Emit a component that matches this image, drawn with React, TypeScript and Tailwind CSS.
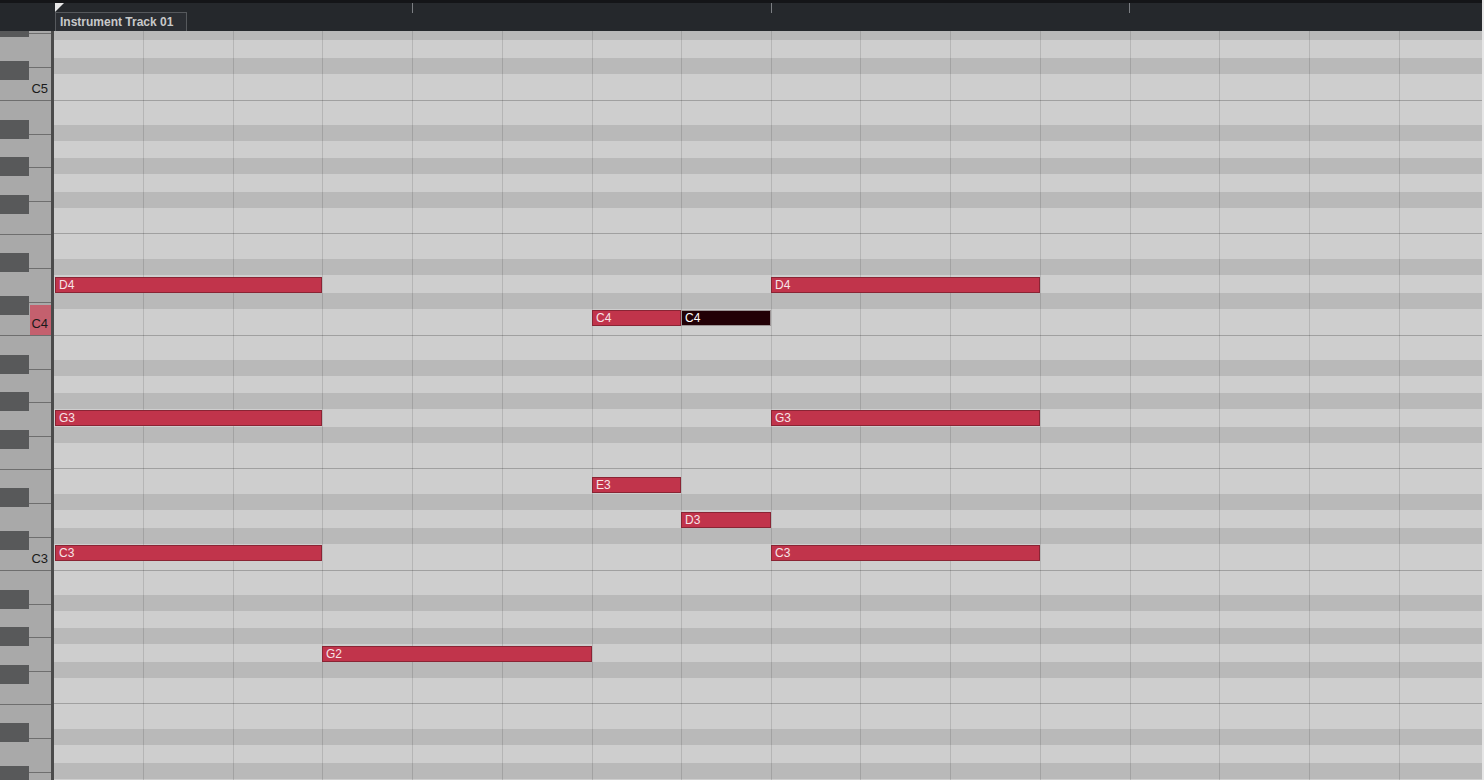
type Note = { label: string; top: number; left: number; width: number; selected?: boolean };

// one octave of grid rows, B at the top down to C
const gridRows = [
  'h-[25px] border-t border-[#a0a0a0] bg-[#cecece]',
  'h-[16px] bg-[#b9b9b9]',
  'h-[17px] bg-[#cecece]',
  'h-[16px] bg-[#b9b9b9]',
  'h-[18px] bg-[#cecece]',
  'h-[16px] bg-[#b9b9b9]',
  'h-[25px] bg-[#cecece]',
  'h-[26px] border-t border-[#a0a0a0] bg-[#cecece]',
  'h-[16px] bg-[#b9b9b9]',
  'h-[18px] bg-[#cecece]',
  'h-[16px] bg-[#b9b9b9]',
  'h-[26px] bg-[#cecece]',
];

const whiteKeys = ['h-[34px]', 'h-[33px]', 'h-[34px]', 'h-[33px]', 'h-[34px]', 'h-[34px]', 'h-[33px]'];
const blackKeys = ['top-[20px]', 'top-[57px]', 'top-[95px]', 'top-[153px]', 'top-[196px]'];

const columns = [
  'w-[89px]',
  'w-[90px] border-l',
  'w-[89px] border-l',
  'w-[90px] border-l',
  'w-[90px] border-l',
  'w-[90px] border-l',
  'w-[89px] border-l',
  'w-[90px] border-l',
  'w-[89px] border-l',
  'w-[90px] border-l',
  'w-[90px] border-l',
  'w-[90px] border-l',
  'w-[89px] border-l',
  'w-[90px] border-l',
  'w-[90px] border-l',
  'flex-1 border-l',
];

const notes: Note[] = [
  { label: 'D4', top: 246, left: 1, width: 267 },
  { label: 'D4', top: 246, left: 717, width: 269 },
  { label: 'C4', top: 279, left: 538, width: 89 },
  { label: 'C4', top: 279, left: 627, width: 90, selected: true },
  { label: 'G3', top: 379, left: 1, width: 267 },
  { label: 'G3', top: 379, left: 717, width: 269 },
  { label: 'E3', top: 446, left: 538, width: 89 },
  { label: 'D3', top: 481, left: 627, width: 90 },
  { label: 'C3', top: 514, left: 1, width: 267 },
  { label: 'C3', top: 514, left: 717, width: 269 },
  { label: 'G2', top: 615, left: 268, width: 270 },
];

const barTicks = ['left-[412px]', 'left-[771px]', 'left-[1129px]'];

function KeyboardOctave({ octave, active, label = true }: { octave: number; active?: boolean; label?: boolean }) {
  return (
    <div className="relative flex h-[235px] flex-col">
      {whiteKeys.map((h, i) => (
        <div key={i} className={`${h} relative border-t border-[#6e6e6e] bg-[#a9a9a9]`}>
          {i === 6 &&
            label &&
            (active ? (
              <div className="absolute top-[2px] right-0 bottom-0 left-[30px] flex items-end justify-end bg-[#c4606e] pr-[3px] pb-[5px] text-[13px] leading-none text-[#1a1a1a]">
                C{octave}
              </div>
            ) : (
              <div className="absolute inset-0 flex items-end justify-end pr-[3px] pb-[5px] text-[13px] leading-none text-[#1a1a1a]">
                C{octave}
              </div>
            ))}
        </div>
      ))}
      {blackKeys.map((t) => (
        <div key={t} className={`absolute left-0 ${t} h-[19px] w-[29px] bg-[#58595a]`} />
      ))}
    </div>
  );
}

function GridOctave() {
  return (
    <div className="flex flex-col">
      {gridRows.map((c, i) => (
        <div key={i} className={c} />
      ))}
    </div>
  );
}

function Header() {
  return (
    <div className="relative h-[31px] shrink-0 border-t-[3px] border-[#141518] bg-[#25282c]">
      <svg className="absolute top-0 left-[55px]" width="9" height="9" viewBox="0 0 9 9">
        <polygon points="0,0 9,0 0,9" fill="#e8e8e8" />
      </svg>
      {barTicks.map((l) => (
        <div key={l} className={`absolute top-0 ${l} h-[10px] w-px bg-[#7c7f83]`} />
      ))}
      <div className="ml-[55px] mt-[9px] flex h-[19px] w-[132px] items-center border border-b-0 border-[#56595d] bg-[#2b2e33] pl-[4px] text-[12px] font-bold text-[#c8c9ca]">
        Instrument Track 01
      </div>
    </div>
  );
}

export default function App() {
  return (
    <div className="flex h-[780px] w-[1484px] overflow-hidden bg-[#cecece] font-['Liberation_Sans',Arial,sans-serif]">
      <div className="flex w-[1482px] flex-col">
        <Header />
        <div className="flex h-[749px] overflow-hidden">
          <div className="w-[51px] shrink-0 overflow-hidden">
            <div className="mt-[-166px]">
              <KeyboardOctave octave={5} />
              <KeyboardOctave octave={4} active />
              <KeyboardOctave octave={3} />
              <KeyboardOctave octave={2} label={false} />
            </div>
          </div>
          <div className="w-[3px] shrink-0 bg-[#4b4b4b]" />
          <div className="relative flex-1 overflow-hidden">
            <div className="mt-[-166px]">
              <GridOctave />
              <GridOctave />
              <GridOctave />
              <GridOctave />
            </div>
            <div className="absolute inset-0 flex">
              {columns.map((c, i) => (
                <div key={i} className={`${c} h-full border-black/12`} />
              ))}
            </div>
            {notes.map((n, i) => (
              <div
                key={i}
                className={`absolute flex h-[16px] items-center border pl-[3px] text-[12px] leading-none ${
                  n.selected
                    ? 'border-[#9b9394] bg-[#220006] text-white'
                    : 'border-[#8a2434] bg-[#c1344b] text-[#f6e4e7]'
                }`}
                style={{ top: n.top, left: n.left, width: n.width }}
              >
                {n.label}
              </div>
            ))}
          </div>
        </div>
      </div>
      <div className="w-[2px] bg-[#e6e6e6]" />
    </div>
  );
}
